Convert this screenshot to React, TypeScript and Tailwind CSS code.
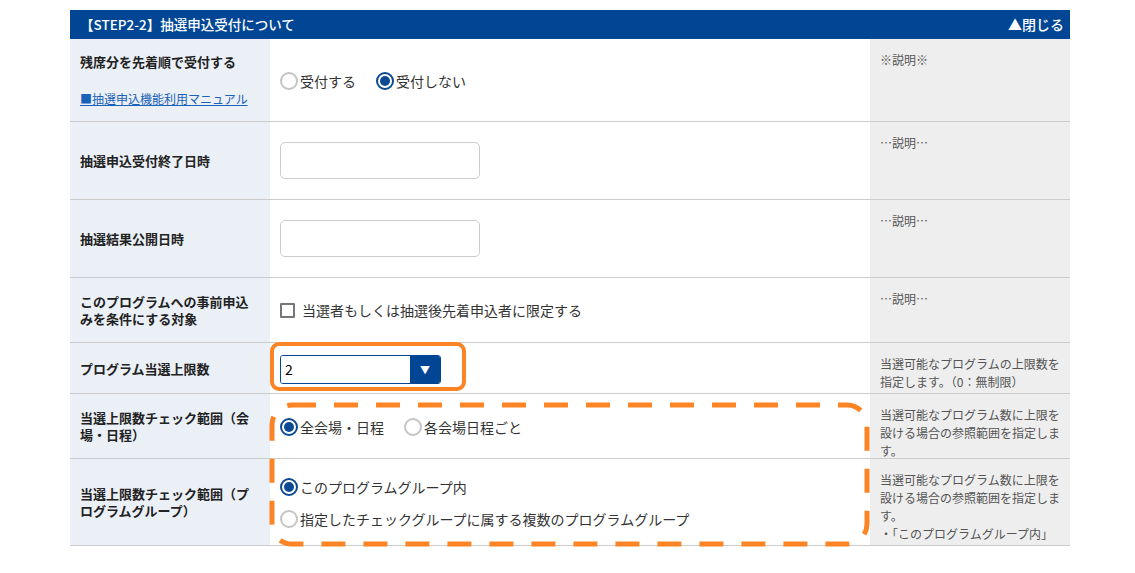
import React from 'react';

const font = { fontFamily: '"Noto Sans CJK JP", "Noto Sans", sans-serif' };

const Radio: React.FC<{ checked?: boolean; label: string }> = ({ checked, label }) => (
  <label className="flex items-center gap-[2px] text-[14px] text-[#333] leading-[20px]">
    {checked ? (
      <span className="w-[18px] h-[18px] rounded-full border-[2px] border-[#0b4a92] flex items-center justify-center">
        <span className="w-[10px] h-[10px] rounded-full bg-[#0b4a92]" />
      </span>
    ) : (
      <span className="w-[18px] h-[18px] rounded-full border-[2px] border-[#c4c4c4] bg-white" />
    )}
    <span>{label}</span>
  </label>
);

type RowProps = {
  h: string;
  label: React.ReactNode;
  children?: React.ReactNode;
  note: React.ReactNode;
};

const Row: React.FC<RowProps> = ({ h, label, children, note }) => (
  <div className={`flex border-b border-[#cccccc] ${h}`}>
    <div className="w-[200px] shrink-0 bg-[#ebf0f7] flex items-center pl-[10px] pr-[10px]">
      <div className="text-[13px] font-bold text-[#222] leading-[17px]">{label}</div>
    </div>
    <div className="flex-1 flex items-center px-[10px]">{children}</div>
    <div className="w-[200px] shrink-0 bg-[#eeeeee] pt-[12px] pl-[10px] pr-[8px] text-[12px] leading-[18px] text-[#555]">
      {note}
    </div>
  </div>
);

const TextBox: React.FC = () => (
  <div className="w-[200px] h-[37px] rounded-[5px] border border-[#cccccc] bg-white" />
);

export default function App() {
  return (
    <div className="w-[1135px] h-[573px] bg-white" style={font}>
      <div className="relative ml-[70px] pt-[10px] w-[1000px]">
        <div className="h-[29px] bg-[#004695] flex items-center justify-between px-[10px] text-white text-[13.5px] font-medium">
          <span>【STEP2-2】抽選申込受付について</span>
          <span className="text-[14px] -mr-[4px]">▲閉じる</span>
        </div>

        <Row
          h="h-[83px]"
          label={
            <div>
              <div>残席分を先着順で受付する</div>
              <a className="block mt-[20px] text-[12px] font-normal text-[#1a62b8] underline">
                ■抽選申込機能利用マニュアル
              </a>
            </div>
          }
          note={<span>※説明※</span>}
        >
          <div className="flex items-center gap-[20px] pt-[2px]">
            <Radio label="受付する" />
            <Radio checked label="受付しない" />
          </div>
        </Row>

        <Row h="h-[78px]" label="抽選申込受付終了日時" note="…説明…">
          <TextBox />
        </Row>

        <Row h="h-[78px]" label="抽選結果公開日時" note="…説明…">
          <TextBox />
        </Row>

        <Row h="h-[65px]" label="このプログラムへの事前申込みを条件にする対象" note="…説明…">
          <label className="flex items-center gap-[7px] text-[14px] text-[#333]">
            <span className="w-[15px] h-[15px] border-[2px] border-[#777] rounded-[1px] bg-white" />
            <span>当選者もしくは抽選後先着申込者に限定する</span>
          </label>
        </Row>

        <Row
          h="h-[51px]"
          label="プログラム当選上限数"
          note={
            <span>
              当選可能なプログラムの上限数を
              <br />
              指定します。（0：無制限）
            </span>
          }
        >
          <div className="flex w-[161px] h-[29px] border border-[#004695] rounded-[3px] overflow-hidden mt-[3px]">
            <div className="flex-1 bg-white text-[14px] text-black pl-[4px] flex items-center">2</div>
            <div className="w-[30px] bg-[#004695] flex items-center justify-center text-white text-[10px]">▼</div>
          </div>
        </Row>

        <Row
          h="h-[65px]"
          label="当選上限数チェック範囲（会場・日程）"
          note="当選可能なプログラム数に上限を設ける場合の参照範囲を指定します。"
        >
          <div className="flex items-center gap-[20px] pt-[2px]">
            <Radio checked label="全会場・日程" />
            <Radio label="各会場日程ごと" />
          </div>
        </Row>

        <Row
          h="h-[87px]"
          label="当選上限数チェック範囲（プログラムグループ）"
          note={
            <span>
              当選可能なプログラム数に上限を設ける場合の参照範囲を指定します。
              <br />
              ・「このプログラムグループ内」
            </span>
          }
        >
          <div className="flex flex-col gap-[12px] pt-[1px]">
            <Radio checked label="このプログラムグループ内" />
            <Radio label="指定したチェックグループに属する複数のプログラムグループ" />
          </div>
        </Row>

        <div className="absolute left-[200px] top-[342px] w-[196px] h-[49px] border-[4px] border-[#fd8424] rounded-[9px] pointer-events-none" />

        <svg
          className="absolute left-[197px] top-[400px] pointer-events-none"
          width="606"
          height="150"
          viewBox="0 0 606 150"
        >
          <rect
            x="5"
            y="5"
            width="595"
            height="139"
            rx="20"
            fill="none"
            stroke="#fd8424"
            strokeWidth="5"
            strokeDasharray="24 18"
          />
        </svg>
      </div>
    </div>
  );
}
